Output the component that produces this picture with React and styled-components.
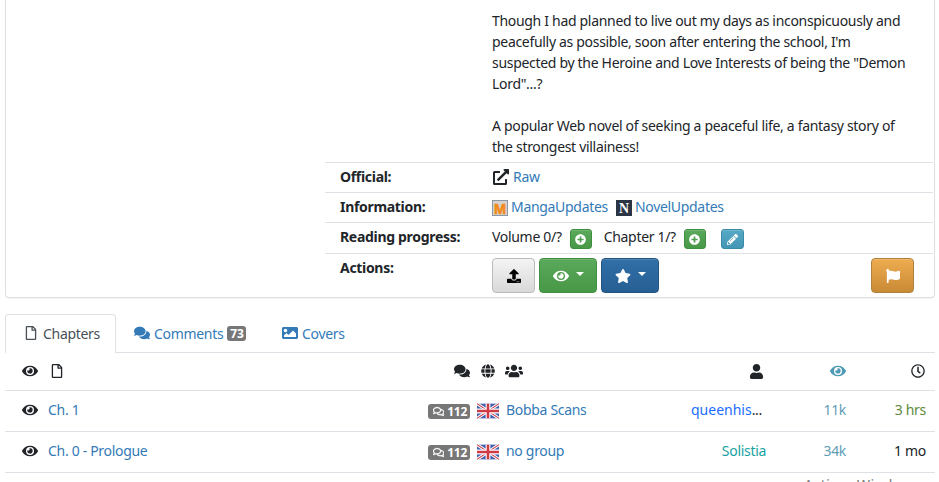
import React from 'react';
import styled, { createGlobalStyle } from 'styled-components';
import {
  FaEye, FaRegFile, FaComments, FaRegComments, FaGlobe, FaUsers, FaUser, FaRegClock,
  FaExternalLinkAlt, FaUpload, FaFlag, FaPlusCircle, FaPencilAlt, FaStar, FaImage,
} from 'react-icons/fa';

const linkColor = '#337ab7';
const lineColor = '#dee2e6';
const textColor = '#212529';

const GlobalStyle = createGlobalStyle`
  html, body {
    margin: 0;
    height: 482px;
    overflow: hidden;
    background: #fff;
  }
  body {
    font-family: "Noto Sans", "Open Sans", sans-serif;
    font-size: 14px;
    line-height: 21px;
    letter-spacing: -0.31px;
    color: ${textColor};
  }
`;

const Page = styled.div`
  padding: 0 4px 0 5px;
  height: 482px;
  overflow: hidden;
`;

const Card = styled.section`
  box-sizing: border-box;
  width: 930px;
  height: 298px;
  padding: 10px 1px 0 319px;
  border: 1px solid #dfdfdf;
  border-top: none;
  border-radius: 0 0 4px 4px;
  box-shadow: 0 1px 1px rgba(0, 0, 0, .04);
`;

const Description = styled.div`
  box-sizing: border-box;
  padding: 0 21px 0 167px;
  height: 152px;
`;

const Para = styled.p`
  margin: 0 0 21px;
`;

const InfoRow = styled.div`
  display: grid;
  grid-template-columns: 152px 1fr;
  height: ${p => p.$h}px;
  box-sizing: border-box;
  border-top: 1px solid ${lineColor};
  padding: 3px 15px 0;
`;

const Label = styled.strong`
  font-weight: 700;
`;

const Value = styled.div`
  display: flex;
  align-items: center;
  height: 21px;
`;

const Link = styled.a`
  color: ${linkColor};
  text-decoration: none;
`;

const RawIcon = styled(FaExternalLinkAlt)`
  color: ${textColor};
  font-size: 16px;
  margin: 0 4px 0 1px;
`;

const Logo = styled.svg`
  width: 16px;
  height: 16px;
  margin: 2px 3px 0 0;
`;

const Spacer = styled.span`
  display: inline-block;
  flex: none;
  width: ${p => p.$w}px;
`;

const Btn = styled.button`
  box-sizing: border-box;
  display: inline-flex;
  align-items: center;
  justify-content: center;
  gap: 5px;
  padding: 0;
  flex: none;
  width: ${p => p.$w}px;
  height: ${p => p.$h}px;
  border-radius: 4px;
  border: 1px solid ${p => p.$border};
  background: linear-gradient(to bottom, ${p => p.$from}, ${p => p.$to});
  color: ${p => p.$color || '#fff'};
  font-size: ${p => p.$size || 14}px;
  box-shadow: inset 0 1px 0 rgba(255, 255, 255, .15);
`;

const SmallBtn = styled(Btn)`
  margin-top: 5px;
  border-radius: 3px;
`;

const Caret = styled.span`
  display: inline-block;
  border-top: 4px solid #fff;
  border-left: 4px solid transparent;
  border-right: 4px solid transparent;
  margin: -3px 0 0 2px;
`;

const ActionBar = styled.div`
  display: flex;
  align-items: flex-start;
  gap: 4px;
  margin-top: 1px;
`;

const PushRight = styled.div`
  margin-left: auto;
  margin-right: 4px;
`;

const Tabs = styled.nav`
  display: flex;
  align-items: flex-start;
  margin-top: 16px;
  height: 39px;
  box-sizing: border-box;
  border-bottom: 1px solid ${lineColor};
  width: 930px;
`;

const Tab = styled.a`
  box-sizing: border-box;
  display: flex;
  align-items: center;
  gap: ${p => p.$gap}px;
  width: ${p => p.$w}px;
  height: ${p => (p.$active ? 39 : 38)}px;
  padding: 0 0 ${p => (p.$active ? 2 : 1)}px ${p => p.$left}px;
  color: ${p => (p.$active ? '#495057' : linkColor)};
  background: #fff;
  border: 1px solid ${p => (p.$active ? lineColor : 'transparent')};
  border-bottom: none;
  border-radius: 4px 4px 0 0;
`;

const Badge = styled.span`
  display: inline-flex;
  align-items: center;
  gap: 3px;
  background: #777;
  color: #fff;
  font-size: 12px;
  font-weight: 700;
  letter-spacing: -0.3px;
  line-height: 15px;
  height: 15px;
  padding: 0 3px;
  border-radius: 3px;
`;

const CommentBadge = styled(Badge)`
  flex: none;
  padding: 0 3px 0 5px;
  width: 42px;
  box-sizing: border-box;
  svg {
    stroke: currentColor;
    stroke-width: 14;
  }
`;

const Row = styled.div`
  display: grid;
  grid-template-columns: 43px 422px 29px 185px 82px 80px 80px 9px;
  align-items: center;
  width: 930px;
  height: ${p => p.$h}px;
  padding-bottom: ${p => p.$pb || 0}px;
  box-sizing: border-box;
  border-bottom: 1px solid ${lineColor};
`;

const EyeCell = styled.div`
  display: flex;
  align-items: center;
  gap: 12px;
  padding: 0 0 ${p => p.$pb || 0}px 17px;
  font-size: 16px;
  color: ${textColor};
  svg {
    flex: none;
  }
`;

const HeadCell = styled.div`
  display: flex;
  align-items: center;
  justify-content: ${p => p.$justify || 'flex-end'};
  padding-right: ${p => p.$pr || 0}px;
  padding-left: ${p => p.$pl || 0}px;
  font-size: ${p => p.$size || 16}px;
  color: ${p => p.$color || textColor};
`;

const Cell = styled.div`
  color: ${p => p.$color || linkColor};
  white-space: nowrap;
  padding-bottom: 4px;
  padding-left: ${p => p.$pl || 0}px;
  padding-right: ${p => p.$pr || 0}px;
  display: flex;
  justify-content: ${p => (p.$right ? 'flex-end' : 'flex-start')};
`;

const TitleBadgeCell = styled.div`
  display: flex;
  align-items: center;
  justify-content: space-between;
`;

const FlagCell = styled.div`
  display: flex;
  justify-content: flex-end;
`;

const UserName = styled.span`
  color: ${p => p.$color};
  letter-spacing: ${p => (p.$wide ? '0' : 'inherit')};
`;

const Flag = styled.svg`
  width: 22px;
  height: 16px;
  display: block;
`;

const Cut = styled.div`
  width: 908px;
  text-align: right;
  margin-top: 1px;
  color: #777;
  font-size: 14px;
  letter-spacing: 0.5px;
`;

function UkFlag() {
  return (
    <Flag viewBox="0 0 60 40">
      <rect width="60" height="40" fill="#3f5fae" />
      <path d="M0 0L60 40M60 0L0 40" stroke="#fff" strokeWidth="8" />
      <path d="M0 0L60 40M60 0L0 40" stroke="#cf3a44" strokeWidth="3" />
      <path d="M30 0V40M0 20H60" stroke="#fff" strokeWidth="13" />
      <path d="M30 0V40M0 20H60" stroke="#cf3a44" strokeWidth="7" />
    </Flag>
  );
}

function ChapterRow({ title, group, user, dots, userColor, views, time, timeColor }) {
  return (
    <Row $h={41}>
      <EyeCell $pb={2}><FaEye /></EyeCell>
      <TitleBadgeCell>
        <Cell>{title}</Cell>
        <CommentBadge><FaRegComments size={13} />112</CommentBadge>
      </TitleBadgeCell>
      <FlagCell><UkFlag /></FlagCell>
      <Cell $pl={7}>{group}</Cell>
      <Cell $right $color={textColor} $pr={dots ? 4 : 0}>
        <UserName $color={userColor} $wide={!!dots}>{user}</UserName>{dots}
      </Cell>
      <Cell $right $color="#5f9db5">{views}</Cell>
      <Cell $right $color={timeColor}>{time}</Cell>
    </Row>
  );
}

export default function App() {
  return (
    <Page>
      <GlobalStyle />
      <Card>
        <Description>
          <Para>
            Though I had planned to live out my days as inconspicuously and peacefully as possible, soon after entering the school, I'm suspected by the Heroine and Love Interests of being the "Demon Lord"...?
          </Para>
          <Para>
            A popular Web novel of seeking a peaceful life, a fantasy story of the strongest villainess!
          </Para>
        </Description>
        <InfoRow $h={30}>
          <Label>Official:</Label>
          <Value><RawIcon /><Link>Raw</Link></Value>
        </InfoRow>
        <InfoRow $h={30}>
          <Label>Information:</Label>
          <Value>
            <Logo viewBox="0 0 16 16">
              <rect width="16" height="16" fill="#8d97a3" />
              <rect x="1" y="1" width="14" height="14" fill="#d6d3cc" />
              <text x="8" y="13.5" fontSize="14.5" fontWeight="700" fill="#f28a1c" stroke="#f28a1c" strokeWidth="0.6" textAnchor="middle" fontFamily="Liberation Sans">M</text>
            </Logo>
            <Link>MangaUpdates</Link>
            <Spacer $w={8} />
            <Logo viewBox="0 0 16 16">
              <rect width="16" height="16" fill="#2b3543" />
              <text x="8" y="13" fontSize="14" fontWeight="700" fill="#fff" textAnchor="middle" fontFamily="Liberation Serif">N</text>
            </Logo>
            <Link>NovelUpdates</Link>
          </Value>
        </InfoRow>
        <InfoRow $h={31}>
          <Label>Reading progress:</Label>
          <Value>
            Volume 0/?
            <Spacer $w={8} />
            <SmallBtn $w={22} $h={20} $size={11} $border="#3e8f3e" $from="#5ba85b" $to="#479847"><FaPlusCircle /></SmallBtn>
            <Spacer $w={12} />
            Chapter 1/?
            <Spacer $w={8} />
            <SmallBtn $w={22} $h={20} $size={11} $border="#3e8f3e" $from="#5ba85b" $to="#479847"><FaPlusCircle /></SmallBtn>
            <Spacer $w={15} />
            <SmallBtn $w={23} $h={20} $size={11} $border="#3a8ba8" $from="#56a9c6" $to="#4397b5"><FaPencilAlt /></SmallBtn>
          </Value>
        </InfoRow>
        <InfoRow $h={44}>
          <Label>Actions:</Label>
          <ActionBar>
            <Btn $w={43} $h={35} $color="#000" $border="#bbb" $from="#f4f4f4" $to="#d8d8d8"><FaUpload /></Btn>
            <Btn $w={58} $h={35} $size={16} $border="#3e8f3e" $from="#5ba85b" $to="#479847"><FaEye /><Caret /></Btn>
            <Btn $w={58} $h={35} $size={16} $border="#245580" $from="#316fa8" $to="#265f93"><FaStar /><Caret /></Btn>
            <PushRight>
              <Btn $w={43} $h={35} $border="#b0813c" $from="#eeac4f" $to="#c98a36"><FaFlag /></Btn>
            </PushRight>
          </ActionBar>
        </InfoRow>
      </Card>
      <Tabs>
        <Tab $active $w={111} $left={18} $gap={5}><FaRegFile /> Chapters</Tab>
        <Tab $w={150} $left={17} $gap={4}><FaComments size={16} /> Comments <Badge>73</Badge></Tab>
        <Tab $w={120} $left={15} $gap={4}><FaImage size={16} /> Covers</Tab>
      </Tabs>
      <Row $h={38} $pb={1}>
        <EyeCell><FaEye /><FaRegFile size={14} /></EyeCell>
        <HeadCell><FaComments /></HeadCell>
        <HeadCell $size={14} $pr={4}><FaGlobe /></HeadCell>
        <HeadCell $justify="flex-start" $pl={6} $size={18}><FaUsers /></HeadCell>
        <HeadCell $pr={2} $size={15}><FaUser /></HeadCell>
        <HeadCell $color="#4d9ab5"><FaEye /></HeadCell>
        <HeadCell $size={14} $pr={1}><FaRegClock /></HeadCell>
      </Row>
      <ChapterRow title="Ch. 1" group="Bobba Scans" user="queenhis" dots="..." userColor="#1a6dff" views="11k" time="3 hrs" timeColor="#5f8a3a" />
      <ChapterRow title="Ch. 0 - Prologue" group="no group" user="Solistia" userColor="#17a2a2" views="34k" time="1 mo" timeColor={textColor} />
      <Cut>Action: Window</Cut>
    </Page>
  );
}
